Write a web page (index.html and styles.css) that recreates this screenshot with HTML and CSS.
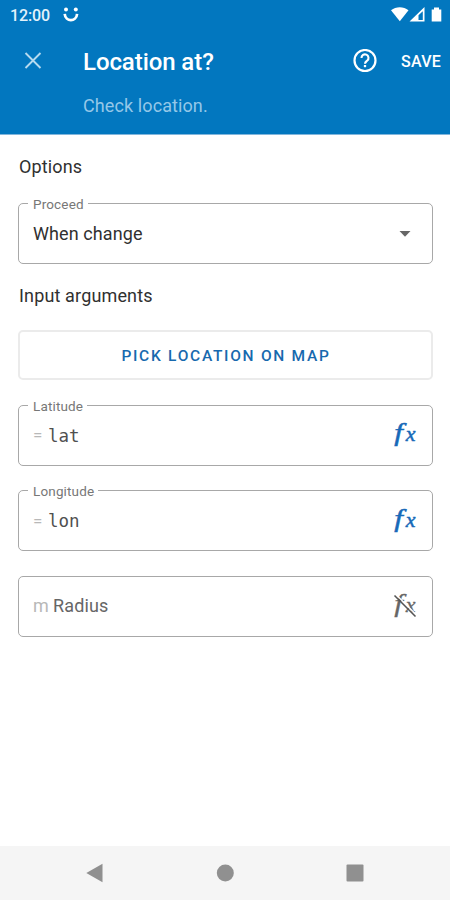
FILE: index.html
```html
<!DOCTYPE html>
<html lang="en">
<head>
<meta charset="utf-8">
<title>Location at?</title>
<link rel="stylesheet" href="styles.css">
</head>
<body>
<div class="screen">
  <header class="header">
    <div class="status">
      <span class="clock">12:00</span>
      <svg class="smile" width="16" height="16" viewBox="0 0 16 16"><circle cx="3" cy="2.6" r="2" fill="#fff"/><circle cx="12.8" cy="2.6" r="2" fill="#fff"/><path d="M1.700 6.800C2.400 15.300 13.400 15.300 14.100 6.800" fill="none" stroke="#fff" stroke-width="2.700"/></svg>
      <svg class="signals" width="54" height="18" viewBox="0 0 54 18"><path d="M0 4.200C5 .3 12.500 .3 17.500 4.200L8.800 15.300Z" fill="#fff"/><path fill-rule="evenodd" d="M18.500 15.500L33.500 1V15.500ZM27.500 9.200V14H31.800V5.200Z" fill="#fff"/><path d="M40.700 3.500h2.300V1.500h5v2h2.300v12h-9.600z" fill="#fff"/></svg>
    </div>
    <div class="appbar">
      <svg class="close" width="18" height="18" viewBox="0 0 18 18"><path d="M1.500 1l15 15M16.500 1l-15 15" stroke="#b5daef" stroke-width="1.900"/></svg>
      <h1 class="title">Location at?</h1>
      <svg class="help" width="24" height="24" viewBox="0 0 24 24" fill="none" stroke="#fff"><circle cx="12" cy="11.500" r="10.500" stroke-width="2.200"/><path d="M8.500 9a3.500 3.500 0 1 1 5.800 2.500c-1.300 1.100-2.300 1.700-2.300 3.300" stroke-width="2.100"/><path d="M12 16v2.200" stroke-width="2.300"/></svg>
      <span class="save">SAVE</span>
    </div>
    <p class="subtitle">Check location.</p>
  </header>
  <main class="content">
    <h2 class="section options">Options</h2>
    <div class="field">
      <span class="label">Proceed</span>
      <span class="value change">When change</span>
      <svg class="arrow" width="12" height="6" viewBox="0 0 12 6"><path d="M.5 0h11L6 5.800z" fill="#666"/></svg>
    </div>
    <h2 class="section arguments">Input arguments</h2>
    <div class="pick">PICK LOCATION ON MAP</div>
    <div class="field">
      <span class="label">Latitude</span>
      <span class="prefix equals">=</span><span class="code">lat</span>
      <span class="fx"><i class="f">f</i><i class="x">x</i></span>
    </div>
    <div class="field">
      <span class="label">Longitude</span>
      <span class="prefix equals">=</span><span class="code">lon</span>
      <span class="fx"><i class="f">f</i><i class="x">x</i></span>
    </div>
    <div class="field">
      <span class="prefix metres">m</span><span class="value radius">Radius</span>
      <span class="fx off"><i class="f">f</i><i class="x">x</i>
        <svg class="slash" width="24" height="24" viewBox="0 0 24 24"><path d="M3 .5L24 21.500" stroke="#fff" stroke-width="1.300"/><path d="M1.500 1.500L22.500 22.500" stroke="#555" stroke-width="1.600"/></svg>
      </span>
    </div>
  </main>
  <nav class="nav">
    <svg width="18" height="20" viewBox="0 0 18 20"><path d="M.3 10L16.500 .8v18.400z" fill="#909090"/></svg>
    <svg width="18" height="18" viewBox="0 0 18 18"><circle cx="9.300" cy="9" r="8.500" fill="#909090"/></svg>
    <svg width="18" height="18" viewBox="0 0 18 18"><rect x=".5" y=".5" width="17" height="17" rx="1" fill="#909090"/></svg>
  </nav>
</div>
</body>
</html>
```
FILE: styles.css
```css
* { box-sizing: border-box; }
body { margin: 0; background: #fff; font-family: Roboto, "Liberation Sans", sans-serif; }
h1, h2, p { margin: 0; }
svg { display: block; flex: none; }

.screen { width: 450px; height: 900px; display: flex; flex-direction: column; overflow: hidden; }

.header { height: 135px; flex: none; background: #0277bf; border-bottom: 1px solid #81b6dc; color: #fff; }
.status { height: 31px; display: flex; align-items: flex-start; padding: 6px 8px 0 10px; }
.clock { width: 53px; font-size: 16px; line-height: 19px; font-weight: 500; letter-spacing: -.1px; color: #e3f2fb; }
.smile { margin-top: 1px; }
.signals { margin-left: auto; margin-right: -3px; }
.appbar { height: 60px; display: flex; align-items: center; padding: 0 8px 0 24px; }
.close { margin-right: 41px; }
.title { padding-top: 1px; font-size: 24px; line-height: 30px; font-weight: 500; letter-spacing: -.08px; white-space: nowrap; }
.help { margin-left: auto; margin-right: 24px; }
.save { width: 41px; padding-top: 1px; font-size: 16px; line-height: 20px; font-weight: 500; letter-spacing: .3px; }
.subtitle { padding: 3px 0 0 83px; font-size: 18px; line-height: 24px; letter-spacing: .1px; color: #94c7e8; }

.content { flex: 1; padding: 21px 17px 0 18px; }
.section { padding-left: 1px; font-size: 18px; line-height: 22px; font-weight: 400; letter-spacing: .15px; color: #303030; }
.options { margin-bottom: 25px; }
.arguments { margin: -4px 0 23px; }

.field { position: relative; height: 61px; margin-bottom: 24.600px; padding: 0 15px 0 14px; display: flex; align-items: center; border: 1.500px solid #a8a8a8; border-radius: 5px; }
.label { position: absolute; top: -8px; left: 9px; padding: 0 4px 0 5px; background: #fff; color: #777; font-size: 13.500px; line-height: 16px; letter-spacing: .15px; white-space: nowrap; }
.value { font-size: 18px; line-height: 22px; color: #303030; }
.change { letter-spacing: .1px; }
.arrow { margin-left: auto; margin-right: 6px; }
.pick { height: 50px; margin-bottom: 25px; display: flex; align-items: center; justify-content: center; border: 2px solid #ebebeb; border-radius: 5px; color: #1769ae; font-size: 15.500px; font-weight: 500; letter-spacing: 1.720px; padding: 2px 0 0 1px; }
.prefix { color: #b8b8b8; }
.equals { width: 15px; font-size: 17px; line-height: 20px; }
.metres { width: 20px; font-size: 18px; line-height: 22px; }
.radius { color: #666; letter-spacing: .15px; }
.code { padding-top: 1px; font-family: "DejaVu Sans Mono", monospace; font-size: 17.500px; line-height: 22px; color: #505050; }

.fx { position: relative; display: flex; align-items: center; justify-content: center; width: 24px; height: 26px; margin-left: auto; font-family: "Liberation Serif", serif; line-height: 26px; color: #1769b8; -webkit-text-stroke: .5px currentColor; }
.f { font-size: 26px; transform: translate(0, -2px) scaleX(1.200); }
.x { font-size: 22px; margin-left: 4px; transform: translateY(-1px); }
.off { color: #666; -webkit-text-stroke: .3px currentColor; }
.slash { position: absolute; left: 0; top: 1px; }

.nav { height: 54px; flex: none; display: flex; align-items: center; justify-content: space-between; padding: 0 86px; background: #f5f5f5; }
```
